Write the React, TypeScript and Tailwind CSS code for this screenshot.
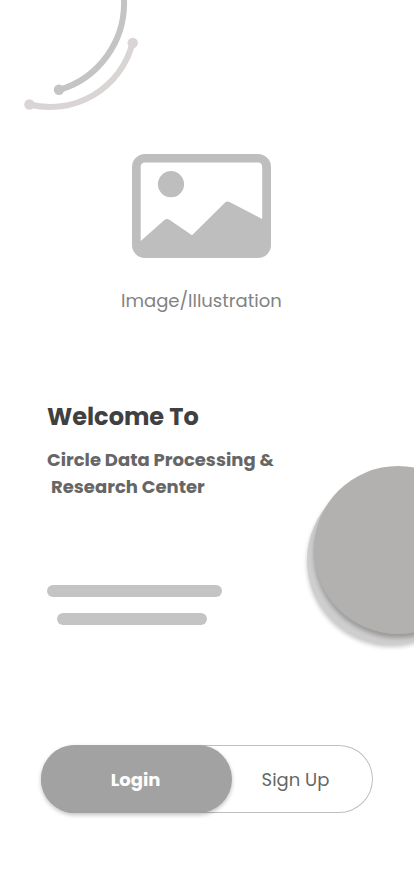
const font = "font-[Poppins,Inter,'Noto_Sans',sans-serif]";

function CornerArcs() {
  return (
    <svg className="absolute left-0 top-0" width="160" height="130" viewBox="0 0 160 130" fill="none">
      <path d="M59 90A90.6 90.6 0 0 0 124 0" stroke="#c4c4c4" strokeWidth="6" />
      <circle cx="59" cy="89.7" r="5.2" fill="#c4c4c4" />
      <path d="M29.5 104.5A85 85 0 0 0 132.5 43" stroke="#d9d5d5" strokeWidth="6" />
      <circle cx="29.4" cy="104.5" r="5.2" fill="#d9d5d5" />
      <circle cx="132.7" cy="43" r="5.2" fill="#d9d5d5" />
    </svg>
  );
}

function Illustration() {
  return (
    <svg width="139" height="104" viewBox="0 0 139 104" fill="#bebebe">
      <path
        fillRule="evenodd"
        d="M13 0H126A13 13 0 0 1 139 13V91A13 13 0 0 1 126 104H13A13 13 0 0 1 0 91V13A13 13 0 0 1 13 0ZM13 8.5Q8.7 8.5 8.7 13V87L32.4 66Q34.8 64 37.4 65.8L60 81.3L92.6 49Q95 46.7 98 48.2L130.2 65V13Q130.2 8.5 126 8.5Z"
      />
      <circle cx="39" cy="30.2" r="13.1" />
    </svg>
  );
}

export default function App() {
  return (
    <main className={`relative flex h-[896px] w-[414px] flex-col overflow-hidden bg-white antialiased ${font}`}>
      <CornerArcs />
      <div className="absolute left-[307px] top-[476px] size-[168px] rounded-full bg-[#cecece] shadow-[0_3px_4px_rgba(0,0,0,0.22)]" />
      <div className="absolute left-[314px] top-[466px] size-[168px] rounded-full bg-[#b2b1b0] shadow-[0_4px_4px_rgba(0,0,0,0.25)]" />

      <figure className="mt-[154px] ml-[121px] w-[180px]">
        <div className="ml-[11px] h-[104px]">
          <Illustration />
        </div>
        <figcaption className="mt-[29px] whitespace-nowrap text-[18px] leading-[27px] text-[#828282]">
          Image/Illustration
        </figcaption>
      </figure>

      <section className="relative mt-[85px] ml-[47px] whitespace-nowrap font-bold">
        <h1 className="h-9 text-[24px] leading-9 text-[#404040]">Welcome To</h1>
        <p className="mt-[11px] text-[18px] leading-[27px] text-[#666666]">
          Circle Data Processing &amp;
          <span className="block pl-1">Research Center</span>
        </p>
      </section>

      <div className="mt-[85px] ml-[47px] flex flex-col gap-4">
        <div className="h-3 w-[175px] rounded-full bg-[#c4c4c4]" />
        <div className="ml-2.5 h-3 w-[150px] rounded-full bg-[#c4c4c4]" />
      </div>

      <div className="mt-[120px] ml-[41px] flex h-[68px] w-[332px] rounded-full text-[18px] shadow-[inset_0_0_0_1px_#bebebe]">
        <button className="w-[191px] rounded-full bg-[#a2a2a2] pr-[2px] font-bold text-white shadow-[0_2px_4px_rgba(0,0,0,0.25)]">
          Login
        </button>
        <button className="flex-1 pr-[14px] text-[#666666]">Sign Up</button>
      </div>
    </main>
  );
}
